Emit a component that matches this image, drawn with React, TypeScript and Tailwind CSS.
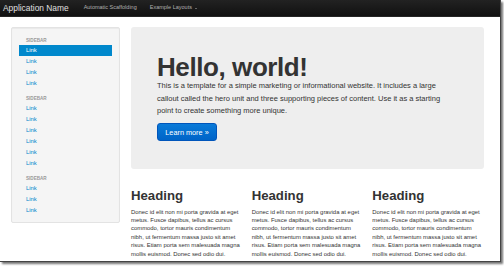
import React from 'react';

const FONT = "font-['Liberation_Sans',Arial,Helvetica,sans-serif]";

const heroLines = [
  'This is a template for a simple marketing or informational website. It includes a large',
  'callout called the hero unit and three supporting pieces of content. Use it as a starting',
  'point to create something more unique.',
];

const colLines = [
  'Donec id elit non mi porta gravida at eget',
  'metus. Fusce dapibus, tellus ac cursus',
  'commodo, tortor mauris condimentum',
  'nibh, ut fermentum massa justo sit amet',
  'risus. Etiam porta sem malesuada magna',
  'mollis euismod. Donec sed odio dui.',
];

const groups = [
  { links: 4, active: 0 },
  { links: 6, active: -1 },
  { links: 3, active: -1 },
];

function Sidebar() {
  return (
    <div className="w-[109px] shrink-0 self-start rounded-[2px] border border-[#e3e3e3] bg-[#f5f5f5] pt-[8px] pb-[6px] shadow-[inset_0_1px_1px_rgba(0,0,0,0.05)]">
      {groups.map((g, gi) => (
        <div key={gi} className={gi > 0 ? 'mt-[5px]' : ''}>
          <div className="h-[9px] px-[14px] text-[4.6px] font-bold uppercase leading-[9px] text-[#999]">Sidebar</div>
          {Array.from({ length: g.links }).map((_, i) => (
            <div
              key={i}
              className={
                'mx-[7px] h-[11px] px-[7px] text-[5.9px] leading-[11px] ' +
                (i === g.active ? 'bg-[#0088cc] text-white' : 'text-[#0088cc]')
              }
            >
              Link
            </div>
          ))}
        </div>
      ))}
    </div>
  );
}

function Column() {
  return (
    <div className="w-[112px]">
      <h2 className="text-[13.2px] font-bold leading-[17px] text-[#333]">Heading</h2>
      <p className="mt-[4px] text-[5.9px] leading-[8.4px] text-[#333]">
        {colLines.map((l) => (
          <span key={l} className="block whitespace-nowrap">{l}</span>
        ))}
      </p>
      {/* top edge of the "View details" button, cut off by the frame */}
      <div className="mt-[3px] h-[12px] w-[46px] rounded-[2px] border border-[#ccc] bg-gradient-to-b from-white to-[#e6e6e6]" />
    </div>
  );
}

export default function App() {
  return (
    <div className={`h-[266px] w-[504px] bg-white ${FONT}`}>
      {/* screenshot frame */}
      <div className="h-[262px] w-[501px] overflow-hidden border-r border-b border-[#444] bg-white shadow-[2px_2px_2px_rgba(0,0,0,0.55)]">
        {/* Navbar */}
        <div className="flex h-[17px] items-center border-b border-[#252525] bg-gradient-to-b from-[#222] to-[#111] pl-[3px]">
          <span className="text-[8.4px] leading-none text-[#e0e0e0]">Application Name</span>
          <span className="ml-[15px] text-[5.5px] leading-none text-[#b0b0b0]">Automatic Scaffolding</span>
          <span className="ml-[13px] flex items-center text-[5.5px] leading-none text-[#b0b0b0]">
            Example Layouts
            <span className="ml-[3px] inline-block border-x-[1.5px] border-t-[1.5px] border-x-transparent border-t-[#b0b0b0]" />
          </span>
        </div>

        {/* Body */}
        <div className="flex gap-[11px] pt-[10px] pl-[11px]">
          <Sidebar />
          <div className="w-[353px]">
            <div className="rounded-[3px] bg-[#eee] pt-[27px] pb-[27px] pl-[26px] text-[#333]">
              <h1 className="text-[26px] font-bold leading-[26px] tracking-[-0.42px]">Hello, world!</h1>
              <p className="text-[7.5px] leading-[12.5px]">
                {heroLines.map((l) => (
                  <span key={l} className="block whitespace-nowrap">{l}</span>
                ))}
              </p>
              <button className="mt-[4px] h-[18px] w-[60px] rounded-[3px] border border-[#0055bb] bg-gradient-to-b from-[#0a7ad8] to-[#0064c8] text-[7.3px] leading-none text-white">
                Learn more »
              </button>
            </div>
            <div className="mt-[18px] flex gap-[9px]">
              <Column />
              <Column />
              <Column />
            </div>
          </div>
        </div>
      </div>
    </div>
  );
}
